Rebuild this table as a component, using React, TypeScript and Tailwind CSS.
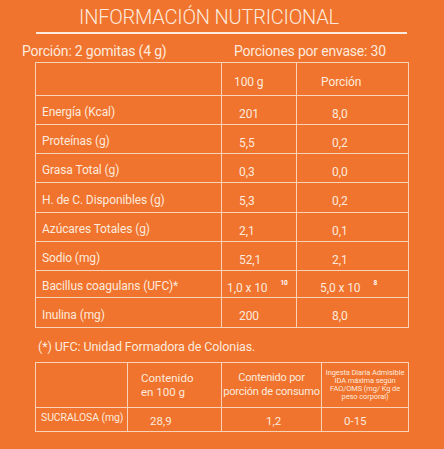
import React from 'react';

const rows: { label: string; a: React.ReactNode; b: React.ReactNode; h: string }[] = [
  { label: 'Energía (Kcal)', a: '201', b: '8,0', h: 'h-[29px]' },
  { label: 'Proteínas (g)', a: '5,5', b: '0,2', h: 'h-[29px]' },
  { label: 'Grasa Total (g)', a: '0,3', b: '0,0', h: 'h-[29px]' },
  { label: 'H. de C. Disponibles (g)', a: '5,3', b: '0,2', h: 'h-[30px]' },
  { label: 'Azúcares Totales (g)', a: '2,1', b: '0,1', h: 'h-[29px]' },
  { label: 'Sodio (mg)', a: '52,1', b: '2,1', h: 'h-[29px]' },
  {
    label: 'Bacillus coagulans (UFC)*',
    a: (
      <span className="-ml-3">
        1,0 x 10<sup className="relative -top-[7px] ml-[13px] text-[6.5px] font-bold text-white">10</sup>
      </span>
    ),
    b: (
      <span className="-ml-3">
        5,0 x 10<sup className="relative -top-[7px] ml-[13px] text-[6.5px] font-bold text-white">8</sup>
      </span>
    ),
    h: 'h-[27px]',
  },
  { label: 'Inulina (mg)', a: '200', b: '8,0', h: 'h-[30px]' },
];

export default function App() {
  return (
    <div
      className="w-[444px] h-[449px] bg-[#f0732e] text-[#fdeadc] overflow-hidden"
      style={{ fontFamily: 'Roboto, "Open Sans", sans-serif' }}
    >
      <div className="pt-[5px] pl-[79px] text-[20px] leading-[24px] font-light tracking-[-0.2px]">
        INFORMACIÓN NUTRICIONAL
      </div>
      <div className="mt-[3px] ml-[36px] w-[371px] h-[2px] bg-[#fdeadc]" />
      <div className="mt-[9px] flex text-[14px] leading-[16px] tracking-[-0.2px]">
        <span className="pl-[22px] w-[234px]">Porción: 2 gomitas (4 g)</span>
        <span>Porciones por envase: 30</span>
      </div>

      <table className="mt-[3px] ml-[35px] w-[373px] border-collapse table-fixed text-[12px] tracking-[-0.1px]">
        <colgroup>
          <col className="w-[186px]" />
          <col className="w-[75px]" />
          <col className="w-[112px]" />
        </colgroup>
        <tbody>
          <tr className="h-[33px]">
            <td className="border border-[#f9d3b8]" />
            <td className="border border-[#f9d3b8] pl-[12px] pt-[5px]">100 g</td>
            <td className="border border-[#f9d3b8] pl-[24px] pt-[5px]">Porción</td>
          </tr>
          {rows.map((r) => (
            <tr key={r.label} className={r.h}>
              <td className="border border-[#f9d3b8] pl-[6px] pt-[4px] whitespace-nowrap">{r.label}</td>
              <td className="border border-[#f9d3b8] pl-[17px] pt-[7px] whitespace-nowrap">{r.a}</td>
              <td className="border border-[#f9d3b8] pl-[35px] pt-[7px] whitespace-nowrap">{r.b}</td>
            </tr>
          ))}
        </tbody>
      </table>

      <div className="mt-[11px] pl-[38px] text-[12.5px] leading-[16px] tracking-[-0.1px]">
        (*) UFC: Unidad Formadora de Colonias.
      </div>

      <table className="mt-[7px] ml-[35px] w-[373px] border-collapse table-fixed">
        <colgroup>
          <col className="w-[92px]" />
          <col className="w-[94px]" />
          <col className="w-[100px]" />
          <col className="w-[87px]" />
        </colgroup>
        <tbody>
          <tr className="h-[45px]">
            <td className="border border-[#f9d3b8]" />
            <td className="border border-[#f9d3b8] pl-[13px] text-[11.5px] leading-[14px] whitespace-nowrap">
              Contenido
              <br />
              en 100 g
            </td>
            <td className="border border-[#f9d3b8] text-center text-[11px] leading-[14px] whitespace-nowrap tracking-[-0.2px]">
              Contenido por
              <br />
              porción de consumo
            </td>
            <td className="border border-[#f9d3b8] text-center text-[7.5px] leading-[8px] whitespace-nowrap tracking-[-0.1px]">
              Ingesta Diaria Admisible
              <br />
              IDA máxima según
              <br />
              FAO/OMS (mg/ Kg de
              <br />
              peso corporal)
            </td>
          </tr>
          <tr className="h-[24px] text-[11.5px]">
            <td className="border border-[#f9d3b8] pl-[5px] align-top pt-[2px] whitespace-nowrap text-[10.5px] tracking-[-0.1px]">SUCRALOSA (mg)</td>
            <td className="border border-[#f9d3b8] pl-[22px] pt-[5px]">28,9</td>
            <td className="border border-[#f9d3b8] pl-[44px] pt-[5px]">1,2</td>
            <td className="border border-[#f9d3b8] pl-[22px] pt-[5px]">0-15</td>
          </tr>
        </tbody>
      </table>
    </div>
  );
}
